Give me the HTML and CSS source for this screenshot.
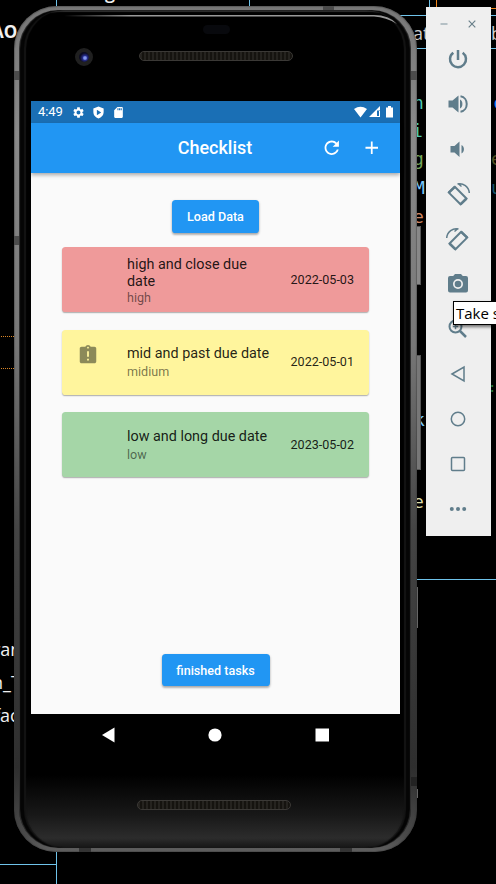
FILE: index.html
```
<!DOCTYPE html>
<html lang="en">
<head>
<meta charset="utf-8">
<title>Checklist</title>
<link rel="stylesheet" href="styles.css">
</head>
<body>
<main class="desktop">
  <svg class="guides" width="496" height="884" viewBox="0 0 496 884" fill="none" stroke="#6fc3ea">
    <path d="M56.500 0V8M249.500 0V8M429.500 0V8M400 15.500H496M400 48.500H496M410 579.500H496M56.500 850V884M0 864.500H56"/>
    <path d="M436.500 0V8M490 8.500H496" stroke="#f38518"/>
    <path d="M1 336.500H14M1 368.500H14" stroke="#d98526" stroke-dasharray="1 1"/>
  </svg>
  <span class="code ao">AO</span>
  <span class="code top-g">g</span>
  <span class="code ran">ran</span>
  <span class="code under">n_T</span>
  <span class="code fac">fac</span>
  <span class="code at">at</span>
  <span class="code b">b</span>
  <span class="code mono n">n</span>
  <span class="code mono i">i</span>
  <span class="code mono g">g</span>
  <span class="code mono m">M</span>
  <span class="code mono e">e</span>
  <span class="code mono k">k</span>
  <span class="code mono e2">e</span>
  <span class="code mono c">c</span>
  <span class="code mono er">e</span>
  <span class="code mono un">u</span>
  <span class="code mono colon">:r</span>

  <i class="side-key power"></i>
  <i class="side-key volume"></i>
  <i class="side-key tail"></i>
  <i class="side-key tail2"></i>

  <section class="phone">
    <i class="band left"></i><i class="band right"></i><i class="band right low-band"></i>
    <i class="band top"></i><i class="band bottom one"></i><i class="band bottom two"></i>
    <div class="glass">
      <svg class="shine" viewBox="0 0 350 22">
        <defs><linearGradient id="edge"><stop offset="0" stop-color="#999" stop-opacity="0"/><stop offset=".2" stop-color="#999"/><stop offset="1" stop-color="#999"/></linearGradient></defs>
        <path d="M0 1H310Q325 1 333 10Q322 3 310 2.500H0z" fill="url(#edge)"/>
      </svg>
      <header class="bezel-top">
        <i class="camera"></i>
        <div class="ear"><i class="sensor"></i><i class="speaker"></i></div>
      </header>
      <div class="screen">
        <div class="status">
          <span class="clock">4:49</span>
          <svg class="gear" viewBox="0 0 24 24"><path d="M19.140 12.940c.04-.3.06-.61.06-.94 0-.32-.02-.64-.07-.94l2.030-1.580c.18-.14.23-.41.12-.61l-1.920-3.320c-.12-.22-.37-.29-.59-.22l-2.390.96c-.5-.38-1.030-.7-1.620-.94l-.36-2.540c-.04-.24-.24-.41-.48-.41h-3.840c-.24 0-.43.17-.47.41l-.36 2.540c-.59.24-1.130.57-1.620.94l-2.390-.96c-.22-.08-.47 0-.59.22L2.740 8.870c-.12.21-.08.47.12.61l2.030 1.580c-.05.3-.09.63-.09.94s.02.64.07.94l-2.030 1.580c-.18.14-.23.41-.12.61l1.920 3.320c.12.22.37.29.59.22l2.390-.96c.5.38 1.030.7 1.620.94l.36 2.540c.05.24.24.41.48.41h3.840c.24 0 .44-.17.47-.41l.36-2.540c.59-.24 1.130-.56 1.620-.94l2.390.96c.22.08.47 0 .59-.22l1.920-3.320c.12-.22.07-.47-.12-.61l-2.010-1.580zM12 15.600c-1.980 0-3.600-1.620-3.600-3.600s1.620-3.600 3.600-3.600 3.600 1.620 3.600 3.600-1.620 3.600-3.600 3.600z"/></svg>
          <svg class="shield" viewBox="0 0 24 24"><path fill-rule="evenodd" d="M12 1 2.500 4.500V11c0 5.500 4 10.500 9.500 12 5.500-1.500 9.500-6.500 9.500-12V4.500zM9 7l8 5-8 5z"/></svg>
          <svg class="sd" viewBox="0 0 24 24"><path d="M18 2h-8L4 8v12c0 1.100.9 2 2 2h12c1.100 0 2-.9 2-2V4c0-1.100-.9-2-2-2zm-6 6h-2V4h2v4zm3 0h-2V4h2v4zm3 0h-2V4h2v4z"/></svg>
          <svg class="signals" viewBox="0 0 40 12"><path d="M0 3Q6.500-1.500 13 3L6.500 11.500zM15 11 26 0V4.500H23V11zM23 10h2v1h-2zM25 5h1v6h-1zM32 1.500h2V0h3v1.500h2v10h-7z"/></svg>
        </div>
        <div class="appbar">
          <h1>Checklist</h1>
          <div class="actions">
            <svg viewBox="0 0 24 24"><path d="M17.650 6.350C16.200 4.900 14.210 4 12 4c-4.420 0-7.990 3.580-7.990 8s3.570 8 7.990 8c3.730 0 6.840-2.550 7.730-6h-2.080c-.82 2.330-3.040 4-5.650 4-3.310 0-6-2.690-6-6s2.690-6 6-6c1.660 0 3.140.69 4.220 1.780L13 11h7V4l-2.350 2.350z"/></svg>
            <svg viewBox="0 0 24 24"><path d="M19 13h-6v6h-2v-6H5v-2h6V5h2v6h6v2z"/></svg>
          </div>
        </div>
        <div class="content">
          <button class="btn load">Load Data</button>
          <div class="list">
            <article class="card high">
              <div class="lead"></div>
              <div class="text"><h2>high and close due date</h2><p>high</p></div>
              <time>2022-05-03</time>
            </article>
            <article class="card mid">
              <div class="lead"><svg viewBox="0 0 24 24"><path d="M19 3h-4.180C14.400 1.840 13.300 1 12 1c-1.300 0-2.400.84-2.820 2H5c-1.100 0-2 .9-2 2v14c0 1.100.9 2 2 2h14c1.100 0 2-.9 2-2V5c0-1.100-.9-2-2-2zm-6 15h-2v-2h2v2zm0-4h-2V8h2v6zm-1-9c-.55 0-1-.45-1-1s.45-1 1-1 1 .45 1 1-.45 1-1 1z"/></svg></div>
              <div class="text"><h2>mid and past due date</h2><p>midium</p></div>
              <time>2022-05-01</time>
            </article>
            <article class="card low">
              <div class="lead"></div>
              <div class="text"><h2>low and long due date</h2><p>low</p></div>
              <time>2023-05-02</time>
            </article>
          </div>
          <button class="btn done">finished tasks</button>
        </div>
      </div>
      <nav class="navbar">
        <svg viewBox="0 0 16 16"><path d="M1 8 13.500 .5V15.500z"/></svg>
        <svg viewBox="0 0 16 16"><circle cx="8" cy="8" r="6.600"/></svg>
        <svg viewBox="0 0 16 16"><path d="M1.500 1.500H15V14.500H1.500z"/></svg>
      </nav>
      <footer class="bezel-bottom"><i class="speaker"></i></footer>
    </div>
  </section>

  <aside class="toolbar">
    <div class="window-keys">
      <svg viewBox="0 0 10 10"><path d="M1.500 5H8.500" stroke="#9dacb3" stroke-width="1.400"/></svg>
      <svg viewBox="0 0 10 10"><path d="M1.700 1.700 8.300 8.300M8.300 1.700 1.700 8.300" stroke="#6a808a" stroke-width="1.200"/></svg>
    </div>
    <svg class="tool" viewBox="0 0 24 24"><path d="M12 3v10M7.300 5.700a8 8 0 1 0 9.400 0" class="line thick"/></svg>
    <svg class="tool" viewBox="0 0 24 24"><path d="M2.500 8.500v7h4L12.500 20.500V3.500L6.500 8.500z"/><path d="M14 7.500c3.200 1.500 3.200 7.500 0 9z"/><path d="M14.500 4.300c8.300 1.200 8.300 14.200 0 15.400" class="line"/></svg>
    <svg class="tool" viewBox="0 0 24 24"><path d="M4.500 9v6.500h4L13.500 20V4.500L8.500 9zM15.500 8c3.300 1.500 3.300 7 0 8.500z"/></svg>
    <svg class="tool" viewBox="0 0 24 24"><path d="M8.800 4.800 20.500 16.500 14.500 22.300 2.800 10.600z" class="line"/><path d="M2.800 10.600 8.800 4.800M14.500 22.300l6-5.800" class="line thick"/><path d="M11.500 2C17 .5 23 5 23.300 11M15.500 4.500 12 1.500" class="line thin"/></svg>
    <svg class="tool" viewBox="0 0 24 24"><path d="M15.200 4.800 3.500 16.500 9.500 22.300 21.200 10.600z" class="line"/><path d="M21.200 10.600 15.200 4.800M9.500 22.300l-6-5.800" class="line thick"/><path d="M12.500 2C7 .5 1 5 .7 11M8.500 4.500 12 1.500" class="line thin"/></svg>
    <svg class="tool" viewBox="0 0 24 24"><path fill-rule="evenodd" d="M9 2 7.200 4H4a2 2 0 0 0-2 2V18.500a2 2 0 0 0 2 2h16a2 2 0 0 0 2-2V6a2 2 0 0 0-2-2h-3.200L15 2zM12 7a5 5 0 1 1 0 10 5 5 0 0 1 0-10z"/><circle cx="12" cy="12" r="3.300"/></svg>
    <svg class="tool" viewBox="0 0 24 24"><circle cx="9.500" cy="9.500" r="6" class="line"/><path d="m14 14 6 6" class="line thick"/><path d="M9.500 6.800v5.400M6.800 9.500h5.400" class="line thin"/></svg>
    <svg class="tool" viewBox="0 0 24 24"><path d="M6 12 18 5V19z" class="line thin"/></svg>
    <svg class="tool" viewBox="0 0 24 24"><circle cx="12" cy="12" r="6.700" class="line thin"/></svg>
    <svg class="tool" viewBox="0 0 24 24"><rect x="5.500" y="5.500" width="13" height="13" rx="1" class="line thin"/></svg>
    <svg class="tool" viewBox="0 0 24 24"><circle cx="5.800" cy="12" r="2"/><circle cx="12" cy="12" r="2"/><circle cx="18.200" cy="12" r="2"/></svg>
    <div class="tooltip">Take s</div>
  </aside>
</main>
</body>
</html>
```
FILE: styles.css
```
* { box-sizing: border-box; }
body { margin: 0; background: #000; font-family: Roboto, sans-serif; }
svg { display: block; flex: none; }
.desktop { position: relative; width: 496px; height: 884px; overflow: hidden; background: #000; }
.guides { position: absolute; left: 0; top: 0; }

/* Code editor behind the emulator */
.code { position: absolute; color: #f0f0f0; font: 18px/22px "Open Sans", sans-serif; white-space: nowrap; }
.mono { font: 18px/22px "DejaVu Sans Mono", monospace; }
.ao { left: -8px; top: 21px; font-size: 17px; font-weight: 700; }
.top-g { left: 105px; top: -19px; font-weight: 600; }
.ran { left: -7px; top: 638px; }
.under { left: -8px; top: 671px; }
.fac { left: -6px; top: 704px; }
.at { left: 413px; top: 22px; color: #ccc; }
.b { left: 491px; top: 22px; color: #ccc; }
.n { left: 413px; top: 92px; color: #4ec9b0; }
.i { left: 412px; top: 120px; color: #4ec9b0; }
.g { left: 413px; top: 148px; color: #74a458; }
.m { left: 414px; top: 177px; color: #7cc8fa; }
.e { left: 413px; top: 206px; color: #ce8663; }
.k { left: 414px; top: 409px; color: #7cc8fa; }
.e2 { left: 413px; top: 491px; color: #dcdcaa; }
.c { left: 493px; top: 92px; color: #168cff; }
.er { left: 491px; top: 148px; color: #505020; }
.un { left: 491px; top: 177px; color: #16546c; }
.colon { left: 488px; top: 376px; color: #287838; font-size: 14px; }

/* Device body */
.side-key { position: absolute; left: 416px; width: 5px; border: 1px solid #555; background: #888; }
.power { top: 226px; height: 59px; }
.volume { top: 355px; height: 115px; background: #777; }
.tail { top: 587px; width: 2px; height: 41px; border: 0; background: #666; }
.tail2 { top: 789px; width: 2px; height: 9px; border: 0; background: #666; }
.phone {
  position: absolute; left: 14px; top: 6px; width: 403px; height: 846px; padding: 4px 6px 4px 5px;
  border-radius: 43px 43px 42px 42px;
  background: linear-gradient(#777, #8a8a8a 15%, #777 40%, #444 62%, #2e2e2e 90%, #4a4a4a 98%, #606060);
  box-shadow: inset 0 0 1px 1px #3336;
}
.band { position: absolute; background: #4b4b4b; }
.band.left { left: 0; top: 65px; width: 6px; height: 9px; box-shadow: 0 165px #4b4b4b; }
.band.right { right: 0; top: 65px; width: 6px; height: 9px; }
.band.low-band { top: 771px; background: #222; }
.band.top { left: 309px; top: 0; width: 11px; height: 5px; }
.band.bottom { bottom: 0; width: 12px; height: 4px; background: #333; }
.band.one { left: 65px; }
.band.two { left: 326px; }
.glass {
  position: relative; display: flex; flex-direction: column; height: 838px; overflow: hidden;
  padding: 0 11px 0 12px; border-radius: 39px;
  background: linear-gradient(#0000 0 765px, #0c0c0c 785px, #181818 805px, #2c2c2c 828px, #151515), #000;
  box-shadow: inset 1px 0 1px #333, inset -1px 0 1px #333, inset 5px 0 1px #050505, inset -5px 0 1px #050505, inset 7px 0 1px #151515, inset -7px 0 1px #151515, inset 0 2px 1px #303030;
}
.shine { position: absolute; left: 45px; top: 4px; width: 350px; height: 22px; }
.bezel-top { display: flex; height: 91px; flex: none; padding: 38px 0 0 44px; }
.camera { width: 18px; height: 18px; border: 4px solid #202020; border-radius: 50%; background: radial-gradient(circle at 60% 60%, #8397ef 0 1.200px, #252b88 2.500px, #0c0c20 5px); }
.ear { display: flex; flex-direction: column; align-items: center; width: 154px; margin: -23px 0 0 46px; gap: 17px; }
.sensor { width: 27px; height: 9px; border-radius: 5px; background: #08090d; }
.speaker { display: block; width: 154px; height: 10px; border: 1px solid #3b3936; border-radius: 5px; background: repeating-linear-gradient(90deg, #25231f 0 2px, #15130f 2px 4px); }
.screen { display: flex; flex-direction: column; width: 369px; height: 613px; flex: none; background: #fafafa; }
.status { display: flex; align-items: center; height: 22px; flex: none; padding: 0 7px; background: #1a6fb5; color: #fff; fill: #fff; }
.clock { width: 34px; font-size: 13px; line-height: 22px; letter-spacing: -.1px; }
.gear, .shield, .sd { width: 13px; height: 13px; }
.shield, .sd { margin-left: 7px; }
.signals { width: 40px; height: 12px; margin-left: auto; transform: translateX(1px); }
.appbar { position: relative; display: flex; align-items: center; justify-content: center; height: 50px; flex: none; background: #2196f3; color: #fff; box-shadow: 0 2px 4px #0005; }
.appbar h1 { margin: 0 1px 0 0; font-size: 17.960px; font-weight: 500; line-height: 24px; }
.actions { position: absolute; right: 18px; top: 14px; display: flex; gap: 18px; }
.actions svg { width: 21.500px; height: 21.500px; fill: #fff; }
.content { display: flex; flex-direction: column; align-items: center; flex: 1; padding: 27px 31px 28px; }
.btn { height: 32.500px; padding: 0; border: 0; border-radius: 3.600px; background: #2196f3; color: #fff; font: 500 12.570px/33px Roboto, sans-serif; box-shadow: 0 2px 2px #0003, 0 1px 3px #0003; }
.load { width: 86.500px; }
.done { width: 108px; margin-top: auto; }
.list { display: flex; flex-direction: column; align-self: stretch; gap: 17.500px; margin-top: 14.500px; }
.card { display: flex; align-items: center; height: 65px; padding: 0 15px 0 14.500px; border-radius: 3.600px; box-shadow: 0 1px 1px #0003, 0 1px 2px #0002; }
.high { background: #ef9a9a; }
.mid { background: #fff59d; }
.low { background: #a5d6a7; }
.lead { width: 50.500px; height: 36px; }
.lead svg { width: 22px; height: 22px; fill: #8c8a59; }
.text { width: 150px; }
.text h2 { width: 148px; margin: 0; color: #000000de; font-size: 14.370px; font-weight: 400; line-height: 17px; }
.text p { margin: 2px 0 0; color: #0000008a; font-size: 12.570px; line-height: 15px; }
.high .text { padding-top: 1px; }
.high h2 { width: 130px; }
.high p { margin: 0; }
.card time { margin-left: auto; color: #000000de; font-size: 12.570px; line-height: 16px; }
.navbar { display: flex; justify-content: center; gap: 90.500px; height: 43px; flex: none; padding: 13px 1px 0 0; }
.navbar svg { width: 16px; height: 16px; fill: #fff; }
.bezel-bottom { padding: 43px 0 0 106px; }

/* Emulator controls */
.toolbar { position: absolute; left: 426px; top: 7px; display: flex; flex-direction: column; align-items: center; gap: 21px; width: 65px; height: 529px; padding-right: 1px; background: #efefef; }
.window-keys { display: flex; gap: 18px; height: 19px; padding-top: 12px; }
.window-keys svg { width: 10px; height: 10px; }
.tool { width: 24px; height: 24px; fill: #607d8b; }
.line { fill: none; stroke: #607d8b; stroke-width: 2; }
.thin { stroke-width: 1.500; }
.thick { stroke-width: 2.500; }
.tooltip { position: absolute; left: 27px; top: 294px; width: 50px; height: 24px; padding-left: 2px; border: 1px solid #000; background: #fff; color: #000; font: 15px/23px "Open Sans", sans-serif; white-space: nowrap; box-shadow: 1px 2px 3px #0008; }
```
